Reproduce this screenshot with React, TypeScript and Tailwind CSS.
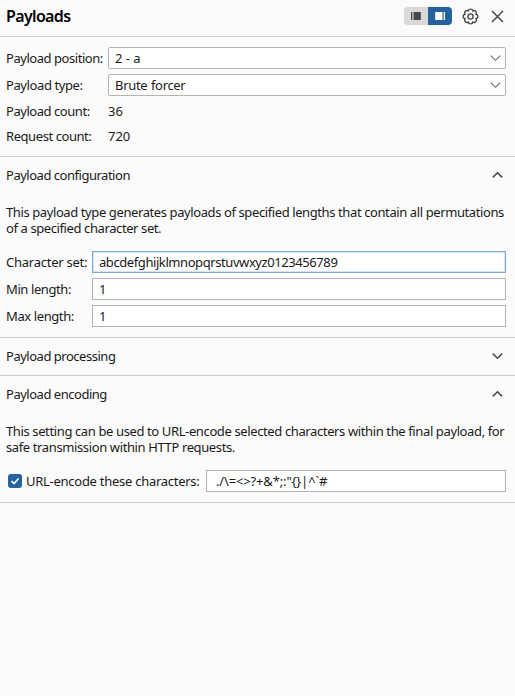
import type { ReactNode } from "react";

function Chevron({ up = false, thin = false }: { up?: boolean; thin?: boolean }) {
  return (
    <svg width="11" height="8" viewBox="0 0 11 8" fill="none" stroke={thin ? "#6b6b6b" : "#484848"} strokeWidth={thin ? 1.1 : 1.5}>
      <path d={up ? "M.8 6.4 5.5 1.7l4.7 4.7" : "M.8 1.6 5.5 6.3l4.7-4.7"} />
    </svg>
  );
}

function Select({ value }: { value: string }) {
  return (
    <div className="flex h-[22px] flex-1 items-center justify-between rounded-[2px] border border-[#b6b2b2] bg-white pr-1 pl-1.5 tracking-[-0.32px] [word-spacing:0.6px]">
      <span>{value}</span>
      <Chevron thin />
    </div>
  );
}

function Field({ label, children }: { label: ReactNode; children: ReactNode }) {
  return (
    <div className="flex h-[22px] items-center">
      <span className="w-[86px] shrink-0">{label}</span>
      {children}
    </div>
  );
}

function SectionHead({ title, open }: { title: string; open: boolean }) {
  return (
    <div className="flex h-9 items-center justify-between pr-[3px] tracking-[-0.48px]">
      <span>{title}</span>
      <Chevron up={open} />
    </div>
  );
}

const inputBase = "flex h-[22px] flex-1 items-center border bg-white";

/* Eight rounded lobes around the gear's hub */
const gearPath =
  Array.from({ length: 9 }, (_, i) => {
    const a = ((i + 0.5) / 8) * Math.PI * 2;
    const x = (8 + 6 * Math.cos(a)).toFixed(2);
    const y = (8 + 6 * Math.sin(a)).toFixed(2);
    return i ? `A2.35 2.35 0 0 1 ${x} ${y}` : `M${x} ${y}`;
  }).join("") + "Z";

export default function App() {
  return (
    <div className="h-[696px] w-[515px] overflow-hidden bg-[#fbfbfb] font-['Noto_Sans',sans-serif] text-[13px] leading-4 tracking-[-0.4px] whitespace-nowrap text-[#1a1a1a]">
      <header className="flex h-[37px] items-center border-b border-[#cdcdcd] pr-[11px] pb-1 pl-1.5">
        <h1 className="flex-1 text-[16px] font-semibold tracking-[-0.65px] text-black">Payloads</h1>
        <div className="flex h-[18px] w-12 overflow-hidden rounded-[4px]">
          <div className="w-6 bg-[#d9d9d9]">
            <svg width="24" height="18" fill="#484848">
              <path d="M7 5h1.3v8H7zM9.5 5h7.3v8H9.5z" />
            </svg>
          </div>
          <div className="w-6 bg-[#25629e]">
            <svg width="24" height="18" fill="#fff">
              <path d="M7.2 5h7.3v8H7.2zM15.7 5h1.3v8h-1.3z" />
            </svg>
          </div>
        </div>
        <svg className="ml-2.5" width="17" height="17" viewBox="-.5 -.5 17 17" fill="none" stroke="#484848" strokeWidth="1.4">
          <path d={gearPath} />
          <circle cx="8" cy="8" r="2.6" />
        </svg>
        <svg className="ml-3" width="13" height="13" viewBox="0 0 13 13" stroke="#484848" strokeWidth="1.5">
          <path d="M1 1l11 11M12 1l-11 11" />
        </svg>
      </header>
      <section className="h-[120px] border-b border-[#cdcdcd] pt-2.5 pr-[9px] pl-1.5">
        <div className="flex h-[22px] items-center">
          <span className="w-[102px] tracking-[-0.45px]">Payload position:</span>
          <Select value="2 - a" />
        </div>
        <div className="mt-[5px] flex h-[22px] items-center">
          <span className="w-[102px]">Payload type:</span>
          <Select value="Brute forcer" />
        </div>
        <div className="mt-[7px] flex">
          <span className="w-[102px] tracking-[-0.45px]">Payload count:</span>
          <span className="tracking-normal">36</span>
        </div>
        <div className="mt-[9px] flex">
          <span className="w-[102px] tracking-[-0.43px]">Request count:</span>
          <span className="tracking-normal">720</span>
        </div>
      </section>
      <section className="h-[181px] border-b border-[#cdcdcd] pr-[9px] pl-1.5">
        <SectionHead title="Payload configuration" open />
        <p className="mt-[11px] h-[47px]">
          This payload type generates payloads of specified lengths that contain all permutations
          <br />
          of a specified character set.
        </p>
        <div className="flex flex-col gap-[5px]">
          <Field label={<span className="tracking-[-0.25px]">Character set:</span>}>
            <div className={`${inputBase} border-[#7faadc] pl-1.5 tracking-[-0.42px] shadow-[inset_0_0_0_1px_#d5e5f7]`}>
              abcdefghijklmnopqrstuvwxyz0123456789
            </div>
          </Field>
          <Field label="Min length:">
            <div className={`${inputBase} border-[#b6b2b2] pl-1.5`}>1</div>
          </Field>
          <Field label="Max length:">
            <div className={`${inputBase} border-[#b6b2b2] pl-1.5`}>1</div>
          </Field>
        </div>
      </section>
      <section className="h-[38px] border-b border-[#cdcdcd] pr-[9px] pl-1.5">
        <SectionHead title="Payload processing" open={false} />
      </section>
      <section className="h-[127px] border-b border-[#cdcdcd] pr-[9px] pl-1.5">
        <SectionHead title="Payload encoding" open />
        <p className="mt-[11px] h-[47px] tracking-[-0.38px]">
          This setting can be used to URL-encode selected characters within the final payload, for
          <br />
          safe transmission within HTTP requests.
        </p>
        <div className="flex h-[22px] items-center">
          <span className="ml-0.5 flex size-3.5 items-center justify-center rounded-[3px] bg-[#25629e]">
            <svg width="10" height="10" viewBox="0 0 10 10" fill="none" stroke="#fff" strokeWidth="1.6">
              <path d="M1.5 5.2 4 7.5 8.5 2.5" />
            </svg>
          </span>
          <span className="ml-1 w-[180px] tracking-[-0.27px]">URL-encode these characters:</span>
          <div className={`${inputBase} border-[#b6b2b2] pl-[9px] tracking-[-0.15px]`}>{"./\\=<>?+&*;:\"{}|^`#"}</div>
        </div>
      </section>
    </div>
  );
}
